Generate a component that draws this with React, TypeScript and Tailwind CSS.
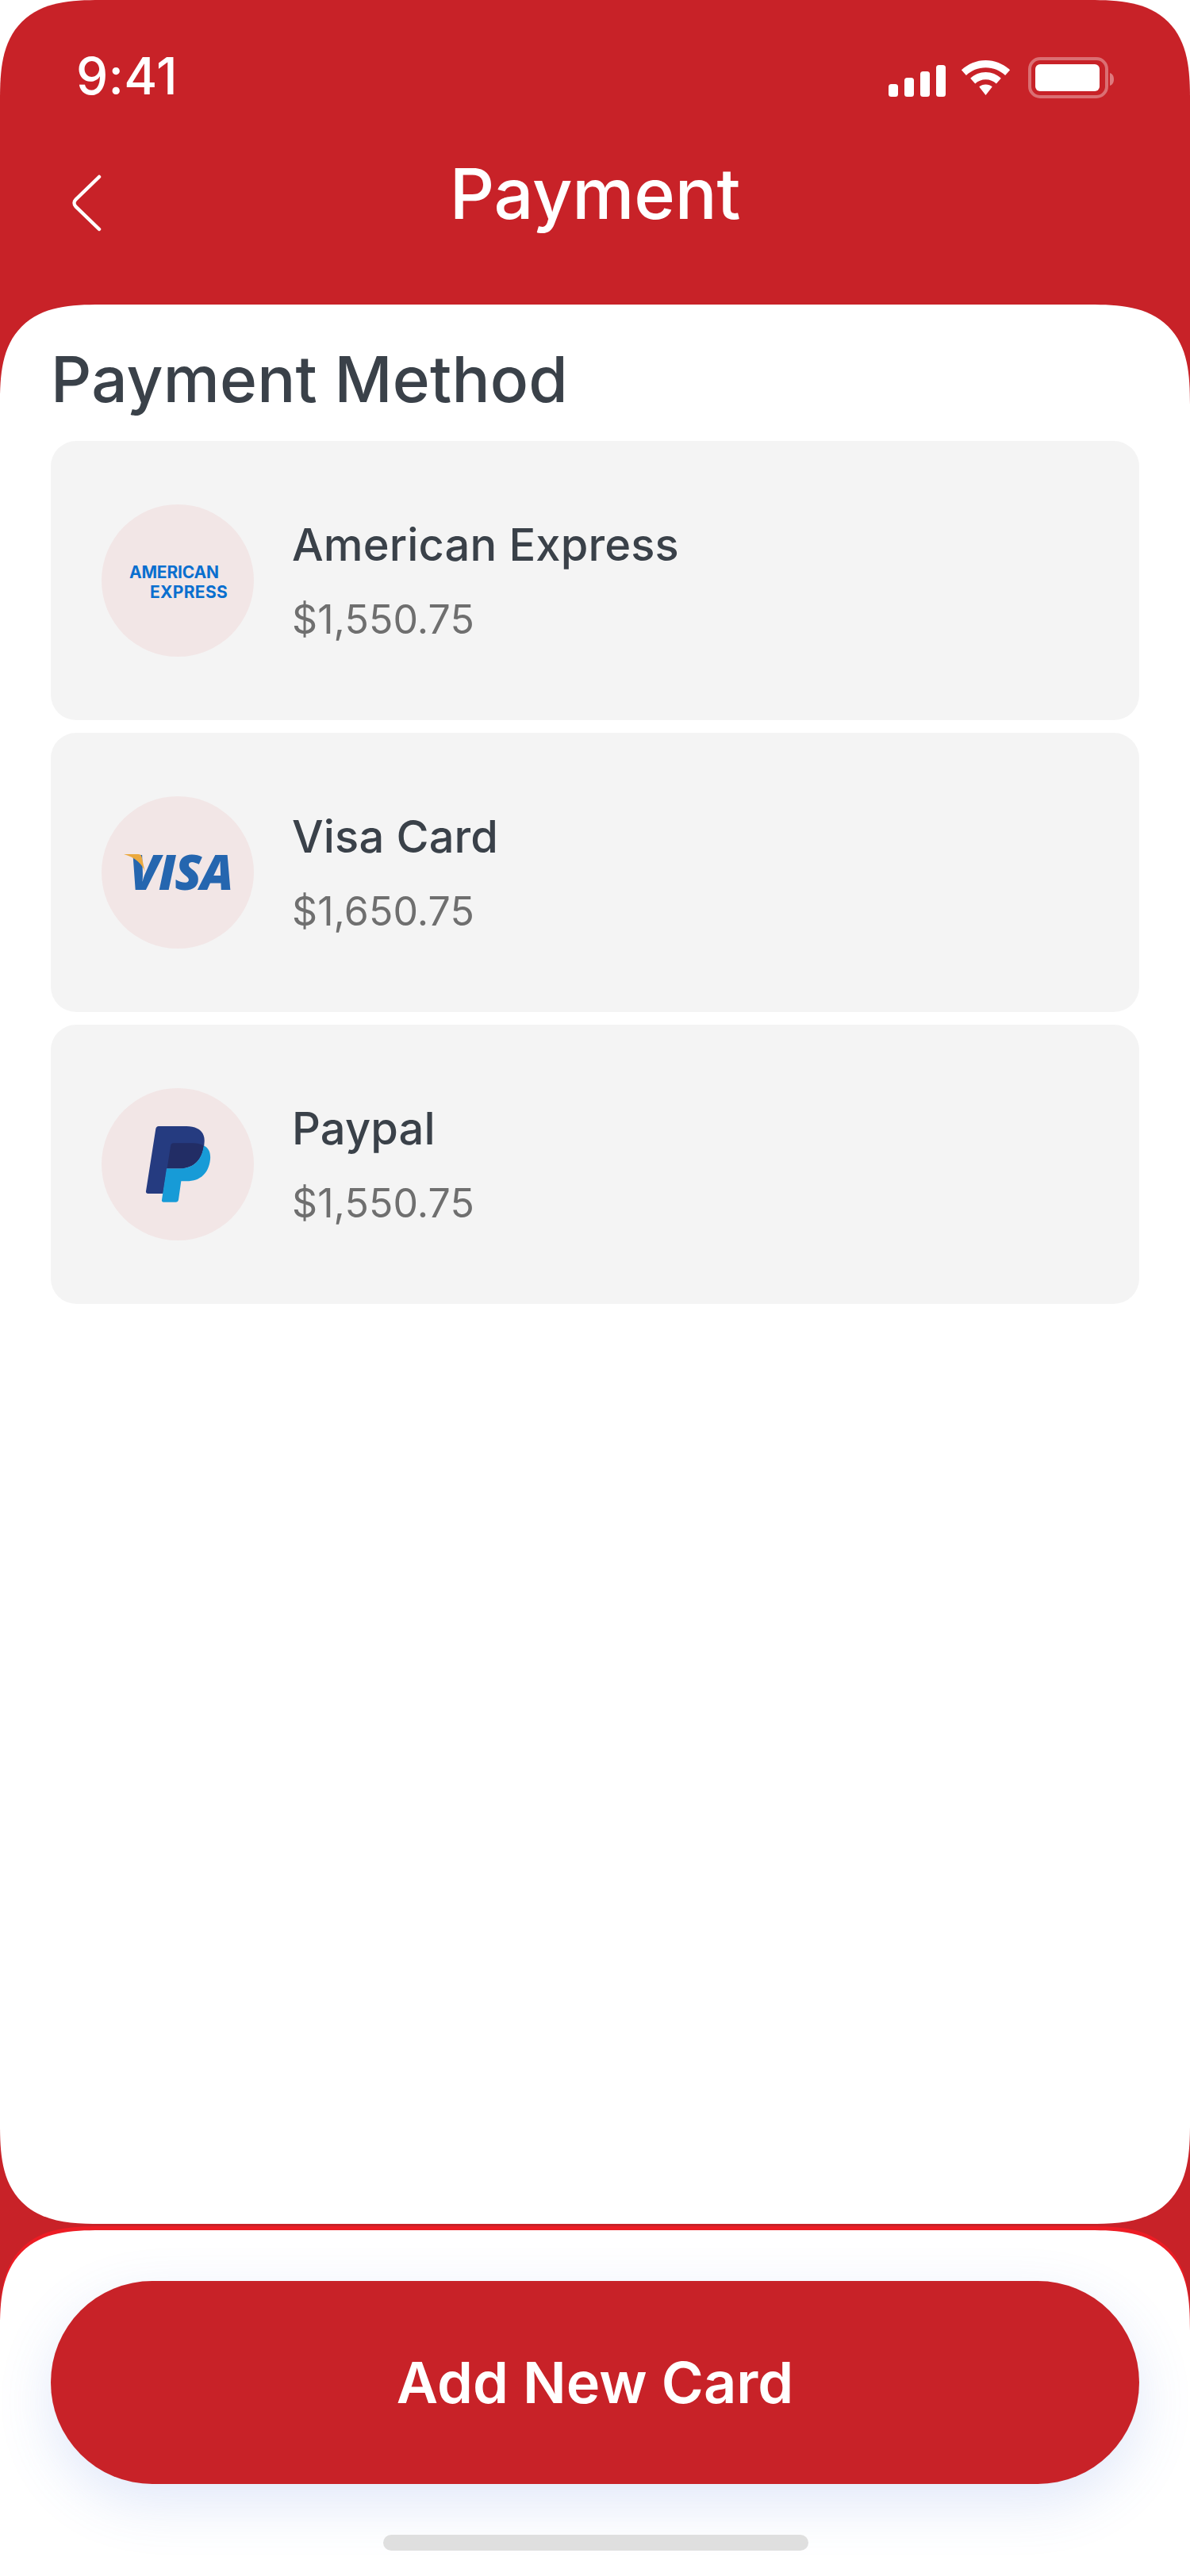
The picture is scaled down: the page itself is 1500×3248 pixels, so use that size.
const methods = [
  { name: "American Express", price: "$1,550.75", logo: "amex" },
  { name: "Visa Card", price: "$1,650.75", logo: "visa" },
  { name: "Paypal", price: "$1,550.75", logo: "paypal" },
];

const StatusIcons = () => (
  <div className="flex items-start">
    <svg width="284" height="60" viewBox="1120 70 284 60" fill="none">
      <rect x="1120" y="106" width="12" height="16" rx="3.500" fill="#fff" />
      <rect x="1140" y="98" width="12" height="24" rx="3.500" fill="#fff" />
      <rect x="1160" y="90" width="12" height="32" rx="3.500" fill="#fff" />
      <rect x="1180" y="82" width="12" height="40" rx="3.500" fill="#fff" />
      <path
        d="M1242.500 76c11.800 0 22.400 4.700 30.600 12.200l-6 6.700c-6.500-6-15-9.700-24.600-9.700s-18.100 3.700-24.600 9.700l-6-6.700c8.200-7.500 18.800-12.200 30.600-12.200z"
        fill="#fff"
      />
      <path
        d="M1242.500 91c7.500 0 14.200 2.900 19.300 7.700l-6 6.700c-3.400-3.200-8.100-5.200-13.300-5.200s-9.900 2-13.300 5.200l-6-6.700c5.100-4.800 11.800-7.700 19.300-7.700z"
        fill="#fff"
      />
      <path d="M1242.500 106.500c3.300 0 6.100 1.200 8.200 3.100l-8.200 10.400-8.200-10.400c2.100-1.900 4.900-3.100 8.200-3.100z" fill="#fff" />
      <rect x="1298" y="74" width="97" height="48" rx="13" stroke="#fff" strokeOpacity="0.35" strokeWidth="4" />
      <rect x="1305" y="81" width="81" height="34" rx="6" fill="#fff" />
      <path d="M1399 92c3 1 5 3.500 5 8s-2 7-5 8z" fill="#fff" fillOpacity="0.4" />
    </svg>
  </div>
);

const BackIcon = () => (
  <svg width="40" height="74" viewBox="90 219 40 74" fill="none">
    <path
      d="M125 223 L95.500 251.500 C93 254 93 258 95.500 260.500 L125 289"
      stroke="#fff"
      strokeWidth="4.500"
      strokeLinecap="round"
    />
  </svg>
);

const AmexLogo = () => (
  <div className="mt-[4px] flex flex-col font-['Inter',sans-serif] text-[21px] leading-[25px] font-bold text-[#0a6fcf]">
    <span className="ml-[2px] tracking-[-0.2px]">AMERICAN</span>
    <span className="ml-[28px] tracking-[0.3px]">EXPRESS</span>
  </div>
);

const VisaLogo = () => (
  <div className="relative flex h-full w-full items-center justify-center">
    <span className="mt-[-5px] ml-[8px] font-['Open_Sans',sans-serif] text-[62px] leading-none font-extrabold tracking-[-1.5px] text-[#2566af] italic">
      VISA
    </span>
    <svg className="absolute inset-0" width="192" height="192" viewBox="84 71 576 576" fill="none">
      <path
        d="M168 290 H222 C230 290 234 293 236 301 L248 356 C238 328 212 302 168 290 Z"
        fill="#eba93f"
      />
    </svg>
  </div>
);

const PaypalLogo = () => (
  <svg width="192" height="192" viewBox="84 66 576 576" fill="none">
    <path
      d="M300 210 H405 C450 210 475 232 473 268 C470 330 440 370 375 370 H332 L317 465 H260 C254 465 251 461 252 456 L289 220 C290 214 294 210 300 210 Z"
      fill="#253b80"
    />
    <path
      d="M470 283 C490 293 497 310 495 335 C490 385 460 418 405 418 H385 L375 488 C374 494 370 497 365 497 H318 C313 497 311 493 312 488 L330 370 H375 C440 370 465 330 470 283 Z"
      fill="#179bd7"
    />
    <path
      d="M345 285 C346 278 350 274 356 274 H430 C445 274 460 278 470 284 C462 335 435 370 375 370 H332 Z"
      fill="#222d65"
    />
  </svg>
);

const MethodLogo = ({ logo }: { logo: string }) => {
  if (logo === "amex") return <AmexLogo />;
  if (logo === "visa") return <VisaLogo />;
  return <PaypalLogo />;
};

const App = () => {
  return (
    <div className="h-[3248px] w-[1500px] overflow-hidden bg-white font-['Inter',sans-serif]">
      <div className="flex h-full flex-col rounded-t-[127px] bg-[#c82228] [corner-shape:superellipse(1.5)]">
        <header className="h-[384px] shrink-0 text-white">
          <div className="flex h-[192px] items-start justify-between pt-[57px] pr-[96px] pl-[96px]">
            <span className="text-[64px] leading-[78px] font-medium tracking-[0.3px]">9:41</span>
            <div className="mt-[13px]">
              <StatusIcons />
            </div>
          </div>
          <div className="relative flex items-center justify-center">
            <div className="absolute top-[27px] left-[90px]">
              <BackIcon />
            </div>
            <h1 className="mt-[-3px] text-[88px] leading-[110px] font-medium tracking-[-0.2px]">Payment</h1>
          </div>
        </header>

        <main className="h-[2420px] shrink-0 rounded-[127px] bg-white px-[64px] pt-[44px] [corner-shape:superellipse(1.5)]">
          <h2 className="text-[80px] leading-[100px] font-medium tracking-[0.2px] text-[#3a4149]">Payment Method</h2>
          <ul className="mt-[28px] flex flex-col gap-[16px]">
            {methods.map((method) => (
              <li key={method.name} className="flex h-[352px] items-center rounded-[32px] bg-[#f4f4f4] pl-[64px]">
                <div className="flex h-[192px] w-[192px] shrink-0 items-center justify-center rounded-full bg-[#f2e6e6]">
                  <MethodLogo logo={method.logo} />
                </div>
                <div className="mt-[4px] ml-[48px] flex flex-col gap-[26px]">
                  <p className="text-[56px] leading-[68px] font-medium tracking-[0.15px] text-[#3a4149]">
                    {method.name}
                  </p>
                  <p className="text-[50px] leading-[68px] tracking-[0.1px] text-[#6f6f6f]">{method.price}</p>
                </div>
              </li>
            ))}
          </ul>
        </main>

        <footer className="mt-[8px] flex flex-1 flex-col items-center rounded-t-[127px] bg-white px-[64px] pt-[64px] shadow-[0_-5px_0_#ed1c24] [corner-shape:superellipse(1.5)]">
          <button className="h-[256px] w-full rounded-full bg-[#c82228] text-[72px] font-semibold text-white shadow-[0_24px_70px_rgba(70,110,220,0.16)]">
            Add New Card
          </button>
          <div className="mt-[64px] ml-[2px] h-[20px] w-[536px] rounded-full bg-[#dfdfdf]" />
        </footer>
      </div>
    </div>
  );
};

export default App;
